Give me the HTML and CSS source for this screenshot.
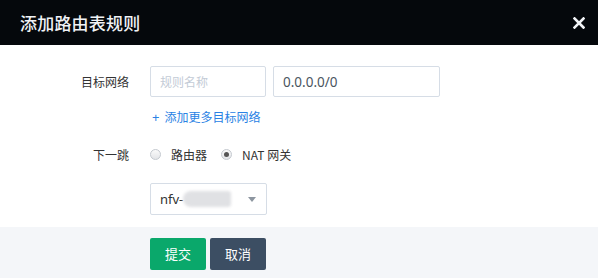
FILE: index.html
```html
<!DOCTYPE html>
<html lang="zh-CN">
<head>
    <meta charset="UTF-8">
    <title>添加路由表规则</title>
    <link rel="stylesheet" href="styles.css">
</head>
<body>
    <div class="modal">
        <div class="modal-header">
            <h1>添加路由表规则</h1>
            <span class="close">
                <svg width="12" height="12" viewBox="0 0 12 12">
                    <path d="M1.5 1.5 L10.5 10.5 M10.5 1.5 L1.5 10.5" stroke="#f2f4f7" stroke-width="2.6" stroke-linecap="square"/>
                </svg>
            </span>
        </div>
        <div class="modal-body">
            <div class="row">
                <label class="row-label">目标网络</label>
                <div class="row-field">
                    <input type="text" class="input input-name" placeholder="规则名称">
                    <input type="text" class="input input-cidr" value="0.0.0.0/0">
                </div>
            </div>
            <div class="row row-link">
                <span class="row-label"></span>
                <a class="add-link" href="#"><span class="plus">+</span>添加更多目标网络</a>
            </div>
            <div class="row row-radio">
                <label class="row-label">下一跳</label>
                <div class="row-field">
                    <label class="radio"><span class="radio-dot"></span>路由器</label>
                    <label class="radio"><span class="radio-dot checked"></span>NAT 网关</label>
                </div>
            </div>
            <div class="row row-select">
                <span class="row-label"></span>
                <div class="select">
                    <span>nfv-</span><span class="blur"></span>
                    <span class="caret"></span>
                </div>
            </div>
        </div>
        <div class="modal-footer">
            <span class="row-label"></span>
            <button class="btn btn-primary">提交</button>
            <button class="btn btn-default">取消</button>
        </div>
    </div>
</body>
</html>
```

FILE: styles.css
```css
* {
    margin: 0;
    padding: 0;
    box-sizing: border-box;
}

body {
    font-family: 'Noto Sans CJK SC', 'Noto Sans', sans-serif;
    background-color: #fff;
    color: #333;
    width: 598px;
    height: 278px;
    overflow: hidden;
}

.modal-header {
    height: 45px;
    background-color: #05080c;
    display: flex;
    align-items: center;
    justify-content: space-between;
    padding: 0 13px 0 20px;
}

.modal-header h1 {
    font-size: 17px;
    font-weight: 500;
    color: #f0f2f5;
    line-height: 1;
    letter-spacing: 0.2px;
}

.close {
    display: flex;
    margin-top: 1px;
}

.modal-body {
    padding: 21px 0 12px;
}

.row {
    display: flex;
    align-items: center;
}

.row-label {
    width: 150px;
    padding-right: 21px;
    text-align: right;
    font-size: 12px;
    color: #333;
    flex-shrink: 0;
}

.row-field {
    display: flex;
    align-items: center;
}

.input {
    height: 31px;
    border: 1px solid #d6dde6;
    border-radius: 2px;
    padding: 0 9px;
    font-family: 'Noto Sans', 'Noto Sans CJK SC', sans-serif;
    font-size: 13.5px;
    color: #4a5560;
    outline: none;
}

.input::placeholder {
    color: #c3cbd6;
    font-family: 'Noto Sans CJK SC', sans-serif;
    font-size: 12px;
}

.input-name {
    width: 116px;
    margin-right: 7px;
}

.input-cidr {
    width: 167px;
}

.row-link {
    margin-top: 12px;
    height: 16px;
}

.add-link {
    font-size: 12px;
    color: #2a82e4;
    text-decoration: none;
    margin-left: 2px;
}

.plus {
    font-family: 'Noto Sans', sans-serif;
    font-size: 13px;
    margin-right: 5px;
}

.row-radio {
    margin-top: 20px;
    height: 18px;
}

.radio {
    display: flex;
    align-items: center;
    font-size: 12px;
    color: #333;
    margin-right: 14px;
}

.radio-dot {
    width: 11px;
    height: 11px;
    border-radius: 50%;
    border: 1px solid #c4c9cf;
    background: linear-gradient(#fafafa, #e3e5e8);
    margin-right: 10px;
    position: relative;
}

.radio-dot.checked::after {
    content: "";
    position: absolute;
    left: 2px;
    top: 2px;
    width: 5px;
    height: 5px;
    border-radius: 50%;
    background-color: #555;
}

.row-select {
    margin-top: 20px;
}

.select {
    width: 117px;
    height: 32px;
    border: 1px solid #d6dde6;
    border-radius: 2px;
    display: flex;
    align-items: center;
    padding-left: 9px;
    font-family: 'Noto Sans', sans-serif;
    font-size: 13px;
    color: #333;
    position: relative;
}

.blur {
    width: 48px;
    height: 16px;
    background-color: #e0e1e4;
    border-radius: 8px 3px 3px 8px;
    filter: blur(1.5px);
}

.caret {
    position: absolute;
    right: 10px;
    top: 13px;
    border-left: 4px solid transparent;
    border-right: 4px solid transparent;
    border-top: 5px solid #8d96a0;
}

.modal-footer {
    background-color: #f4f6f9;
    height: 52px;
    display: flex;
    align-items: center;
    padding-top: 1px;
}

.modal-footer .row-label {
    width: 150px;
}

.btn {
    width: 56px;
    height: 32px;
    border: none;
    border-radius: 2px;
    font-family: 'Noto Sans CJK SC', sans-serif;
    font-size: 13px;
    color: #fff;
    margin-right: 4px;
}

.btn-primary {
    background-color: #0aa86b;
}

.btn-default {
    background-color: #3c4e63;
}
```
